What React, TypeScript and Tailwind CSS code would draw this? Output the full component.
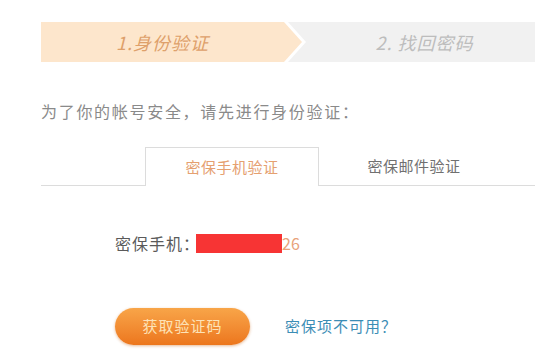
export default function App() {
  return (
    <div className="min-h-screen bg-white pt-[22px] pl-[41px] font-['Noto_Sans_CJK_SC','Noto_Sans',sans-serif]">
      {/* steps */}
      <div className="flex h-10 bg-[#f1f1f1]">
        <div className="w-[265px] h-full bg-white [clip-path:polygon(0_0,calc(100%-18px)_0,100%_50%,calc(100%-18px)_100%,0_100%)]">
          <div className="flex h-full w-[261px] items-center justify-center bg-[#fde6cc] pr-[18px] [clip-path:polygon(0_0,calc(100%-18px)_0,100%_50%,calc(100%-18px)_100%,0_100%)]">
            <span className="text-[18px] italic tracking-[1px] text-[#dea06a]">1.身份验证</span>
          </div>
        </div>
        <div className="flex flex-1 items-center justify-center pl-2">
          <span className="text-[18px] italic tracking-[1px] text-[#bdbdbd]">2. 找回密码</span>
        </div>
      </div>

      <p className="mt-[37px] text-[16px] leading-6 tracking-[1.7px] text-[#8a8a8a]">
        为了你的帐号安全，请先进行身份验证：
      </p>

      {/* tabs */}
      <div className="mt-6 flex border-b border-[#dcdcdc]">
        <div className="-mb-px ml-[104px] flex h-[39px] w-[174px] items-center justify-center border border-b-0 border-[#dcdcdc] bg-white text-[15px] tracking-[0.5px] text-[#e5a070]">
          密保手机验证
        </div>
        <div className="flex h-[38px] w-[190px] items-center justify-center text-[15px] tracking-[0.5px] text-[#707070]">
          密保邮件验证
        </div>
      </div>

      <div className="mt-[45px] ml-[74px] flex h-6 items-center text-[16px] tracking-[1px] text-[#5a5a5a]">
        <span>密保手机：</span>
        <span className="-ml-1 h-[19px] w-[86px] bg-[#f73434]"></span>
        <span className="text-[#e8a27a] tracking-normal">26</span>
      </div>

      <div className="mt-[53px] ml-[74px] flex items-center">
        <button className="h-[37px] w-[135px] rounded-full bg-gradient-to-b from-[#f8a548] to-[#ec761c] text-[15px] tracking-[1px] text-[#fde3b8] shadow-[0_1px_3px_rgba(200,100,20,0.45)]">
          获取验证码
        </button>
        <a className="ml-[35px] text-[15px] tracking-[1px] text-[#3b8db5]">密保项不可用？</a>
      </div>
    </div>
  )
}
